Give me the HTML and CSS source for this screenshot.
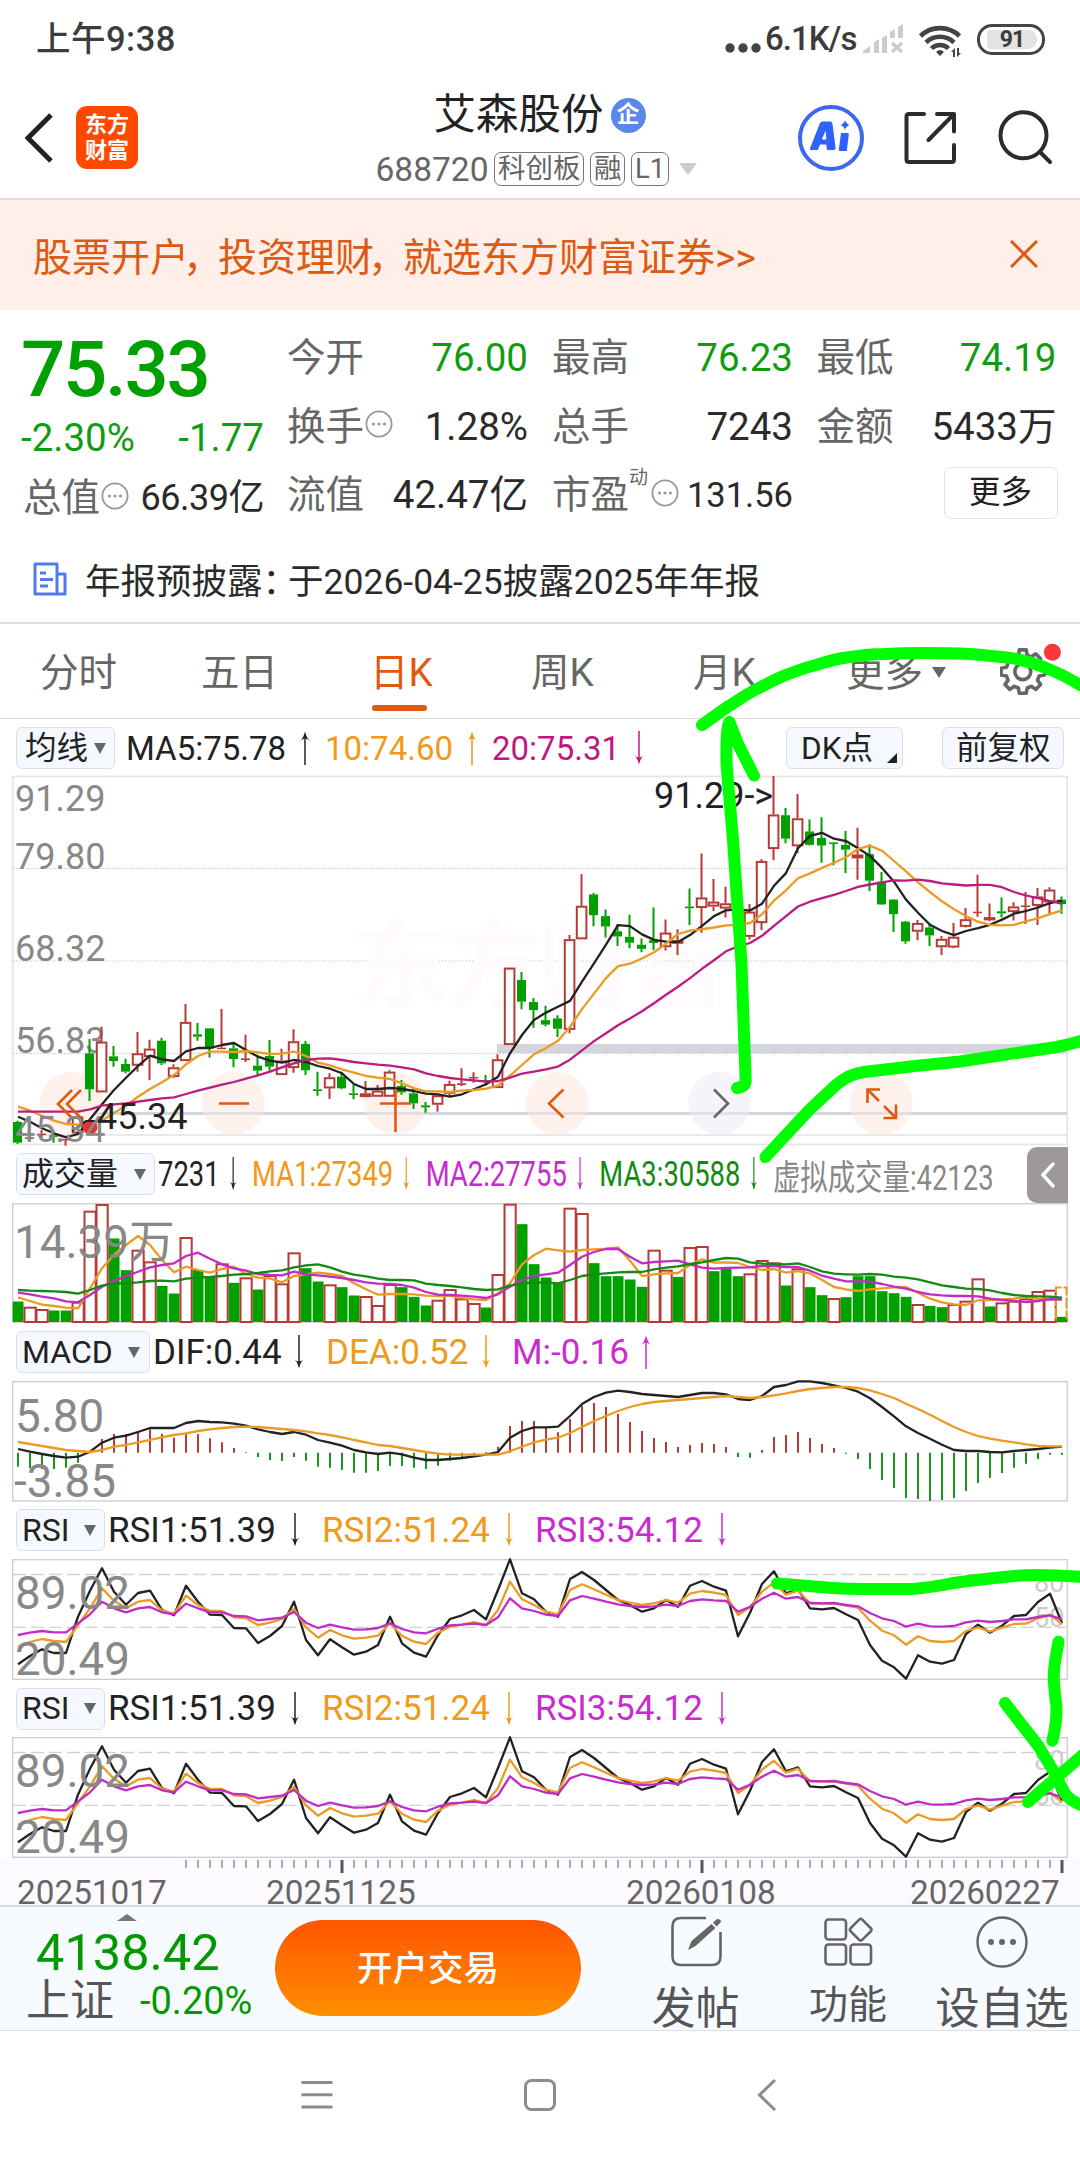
FILE: index.html
```html
<!DOCTYPE html>
<html lang="zh-CN">
<head>
<meta charset="utf-8">
<title>艾森股份 688720</title>
<link rel="stylesheet" href="styles.css">
</head>
<body>
<svg class="defs" width="0" height="0">
  <symbol id="down" viewBox="0 0 14 34"><path d="M7 0V31" stroke="currentColor" stroke-width="1.5" fill="none"/><path d="M.5 23q4.500 2 6.500 10.500q2-8.500 6.500-10.500q-4.500 3.500-6.500 3.500t-6.500-3.500z" fill="currentColor"/></symbol>
  <symbol id="up" viewBox="0 0 14 34"><path d="M7 3V34" stroke="currentColor" stroke-width="1.5" fill="none"/><path d="M.5 11q4.500-2 6.500-10.500q2 8.500 6.500 10.500q-4.500-3.500-6.500-3.500t-6.500 3.500z" fill="currentColor"/></symbol>
  <symbol id="info" viewBox="0 0 28 28"><circle cx="14" cy="14" r="12.6" fill="none" stroke="#999" stroke-width="1.8"/><g fill="#999"><circle cx="8.5" cy="14" r="1.6"/><circle cx="14" cy="14" r="1.6"/><circle cx="19.5" cy="14" r="1.6"/></g></symbol>
</svg>
<main class="phone">
  <header class="status">
    <span class="clock">上午9:38</span>
    <svg class="dots" width="36" height="30" viewBox="0 0 36 30"><g fill="#444"><circle cx="5" cy="24" r="4.7"/><circle cx="18" cy="24" r="4.7"/><circle cx="31" cy="24" r="4.7"/></g></svg>
    <span class="speed">6.1K/s</span>
    <svg class="signal" width="41" height="30" viewBox="0 0 41 30"><path fill="#ccc" d="M0 29V27l7-5v7zM11 18l5-3v14h-5zM19 14l5-3v18h-5zM27 8l5-3v9h-5zM35 3l5-3v14h-5z"/><path d="M29 19l10 9M39 19l-10 9" stroke="#ccc" stroke-width="3.5"/></svg>
    <svg class="wifi" width="44" height="34" viewBox="0 0 44 34"><g fill="none" stroke="#444" stroke-width="4.6"><path d="M1.500 12a28 28 0 0 1 39 0"/><path d="M7 18.500a20 20 0 0 1 28 0"/><path d="M12.500 24.500a12 12 0 0 1 17 0"/></g><path fill="#444" d="M17 28q4-4 8 0l-4 4zM32 28l4-4v9h-2v-5zM42 29l-4 4v-9h2v5z"/></svg>
    <span class="battery"><b>91</b></span>
  </header>

  <section class="title">
    <svg class="back" width="28" height="50" viewBox="0 0 28 50"><path d="M26 2L3 25l23 23" fill="none" stroke="#222" stroke-width="5"/></svg>
    <div class="logo"><span>东方</span><span>财富</span></div>
    <div class="name-block">
      <div class="name">艾森股份<i class="ent">企</i></div>
      <div class="code">688720<span class="tag">科创板</span><span class="tag">融</span><span class="tag">L1</span><span class="caret"></span></div>
    </div>
    <svg class="tools" width="280" height="100" viewBox="790 90 280 100">
      <circle cx="831" cy="138" r="31" fill="none" stroke="#3c68ee" stroke-width="4"/>
      <path fill="#2f62ff" fill-rule="evenodd" d="M820 123q.8-1.500 3-1.500h7q2 0 2.400 2l3.200 24q.2 2.500-2 2.500h-6.600l-.8-5.500h-6l-2.400 5.500h-6q-2.500 0-1.600-2.300zM825.500 130.500l-3.600 9h4.500z"/>
      <path fill="#2f62ff" d="M841 133h7q1 0 .8 1.500l-2 16.500h-6.600q-1.600 0-1.400-1.600zM845 120q1.200 4.200 5 5q-3.800.8-5 5q-1.200-4.200-5-5q3.800-.8 5-5z"/>
      <g fill="none" stroke="#2b2b2b" stroke-width="4" stroke-linecap="round" stroke-linejoin="round"><path d="M924 114h-15q-2.500 0-2.500 2.500v43q0 2.500 2.500 2.500h42.500q2.500 0 2.500-2.500V145M937 114h17v17.500M953 115l-24.500 25"/><circle cx="1023.500" cy="135.300" r="23"/><path d="M1040 152l10 10"/></g>
    </svg>
  </section>

  <section class="banner"><span>股票开户<i>，</i>投资理财<i>，</i>就选东方财富证券&gt;&gt;</span>
    <svg width="28" height="28" viewBox="0 0 28 28"><path d="M1 1l26 26M27 1L1 27" stroke="#dc5a14" stroke-width="3"/></svg>
  </section>

  <section class="quote">
    <div class="q-main">
      <div class="price">75.33</div>
      <div class="chg"><span>-2.30%</span><span>-1.77</span></div>
      <div class="cell small"><label>总值</label><svg class="info"><use href="#info"/></svg><b>66.39亿</b></div>
    </div>
    <div class="q-col">
      <div class="cell"><label>今开</label><b class="g">76.00</b></div>
      <div class="cell"><label>换手</label><svg class="info"><use href="#info"/></svg><b>1.28%</b></div>
      <div class="cell"><label>流值</label><b>42.47亿</b></div>
    </div>
    <div class="q-col">
      <div class="cell"><label>最高</label><b class="g">76.23</b></div>
      <div class="cell"><label>总手</label><b>7243</b></div>
      <div class="cell small"><label>市盈</label><sup>动</sup><svg class="info"><use href="#info"/></svg><b>131.56</b></div>
    </div>
    <div class="q-col last">
      <div class="cell"><label>最低</label><b class="g">74.19</b></div>
      <div class="cell"><label>金额</label><b>5433万</b></div>
      <div class="more">更多</div>
    </div>
  </section>

  <section class="news">
    <svg width="34" height="34" viewBox="0 0 34 34"><g fill="none" stroke="#4f7be8" stroke-width="3" stroke-linejoin="round"><path d="M2 2h22v30H2zM24 12h8v20h-8M7 11h6M7 17.500h13M7 24h8"/></g></svg>
    <span>年报预披露<i>：</i>于2026-04-25披露2025年年报</span>
  </section>

  <nav class="tabs">
    <span class="t1">分时</span><span class="t2">五日</span><span class="t3 on">日K</span><span class="t4">周K</span><span class="t5">月K</span><span class="t6">更多</span><i></i>
    <svg width="62" height="60" viewBox="1000 642 62 60"><path id="gear" fill="none" stroke="#666" stroke-width="3.600" stroke-linejoin="round"/><circle cx="1022.800" cy="670.600" r="8" fill="none" stroke="#666" stroke-width="3.600"/><circle cx="1052.400" cy="651.300" r="8.500" fill="#f93939"/></svg>
  </nav>

  <div class="row ma">
    <span class="pick">均线<i></i></span>
    <span class="v k">MA5:75.78</span><svg class="ar k"><use href="#up"/></svg>
    <span class="v o">10:74.60</span><svg class="ar o"><use href="#up"/></svg>
    <span class="v p">20:75.31</span><svg class="ar p"><use href="#down"/></svg>
    <span class="pick dk">DK点<em></em></span><span class="pick fq">前复权</span>
  </div>
  <svg class="plot" id="price" width="1080" height="369" viewBox="0 776 1080 369"></svg>

  <div class="row vol">
    <span class="pick">成交量<i></i></span>
    <div class="squeeze">
      <span class="v k">7231</span><svg class="ar k"><use href="#down"/></svg>
      <span class="v o">MA1:27349</span><svg class="ar o"><use href="#down"/></svg>
      <span class="v m">MA2:27755</span><svg class="ar m"><use href="#down"/></svg>
      <span class="v gr">MA3:30588</span><svg class="ar gr"><use href="#down"/></svg>
      <span class="v gy">虚拟成交量:42123</span>
    </div>
    <span class="fold"><svg width="18" height="28" viewBox="0 0 18 28"><path d="M14 3L4 14l10 11" fill="none" stroke="#fff" stroke-width="3.500" stroke-linecap="round"/></svg></span>
  </div>
  <svg class="plot" id="volume" width="1080" height="120" viewBox="0 1203 1080 120"></svg>

  <div class="row macd">
    <span class="pick">MACD<i></i></span>
    <span class="v k">DIF:0.44</span><svg class="ar k"><use href="#down"/></svg>
    <span class="v o">DEA:0.52</span><svg class="ar o"><use href="#down"/></svg>
    <span class="v m">M:-0.16</span><svg class="ar m"><use href="#up"/></svg>
  </div>
  <svg class="plot" id="macd" width="1080" height="120" viewBox="0 1381 1080 120"></svg>

  <div class="row rsi">
    <span class="pick">RSI<i></i></span>
    <span class="v k">RSI1:51.39</span><svg class="ar k"><use href="#down"/></svg>
    <span class="v o">RSI2:51.24</span><svg class="ar o"><use href="#down"/></svg>
    <span class="v m">RSI3:54.12</span><svg class="ar m"><use href="#down"/></svg>
  </div>
  <svg class="plot rsi-plot" width="1080" height="121" viewBox="0 1559 1080 121"></svg>
  <div class="row rsi second">
    <span class="pick">RSI<i></i></span>
    <span class="v k">RSI1:51.39</span><svg class="ar k"><use href="#down"/></svg>
    <span class="v o">RSI2:51.24</span><svg class="ar o"><use href="#down"/></svg>
    <span class="v m">RSI3:54.12</span><svg class="ar m"><use href="#down"/></svg>
  </div>
  <svg class="plot rsi-plot" width="1080" height="121" viewBox="0 1559 1080 121"></svg>

  <div class="axis">
    <svg id="ticks" width="1080" height="16" viewBox="0 1858 1080 16"></svg>
    <div class="dates"><span>20251017</span><span>20251125</span><span>20260108</span><span>20260227</span></div>
  </div>

  <footer class="bar">
    <div class="index"><i class="tri"></i><div class="pts">4138.42</div><div class="idx"><span>上证</span><b>-0.20%</b></div></div>
    <div class="trade">开户交易</div>
    <div class="act a1"><svg width="54" height="54" viewBox="669 1915 54 54"><path d="M706 1918h-25q-8.500 0-8.500 8.500v30q0 8.500 8.500 8.500h31q8.500 0 8.500-8.500V1932" fill="none" stroke="#666" stroke-width="2.600"/><path fill="#666" d="M688 1950l3.500-9 20-17 4 4-20 18zM713 1922.500l4-3.500q4 0 4 3l-4.500 4.500z"/></svg><span>发帖</span></div>
    <div class="act a2"><svg width="54" height="54" viewBox="822 1915 54 54"><g fill="none" stroke="#666" stroke-width="2.600"><rect x="826.500" y="1919.500" width="20.500" height="20" rx="3"/><rect x="826.500" y="1944.500" width="20.500" height="20" rx="3"/><rect x="851.500" y="1944.500" width="20.500" height="20" rx="3"/><rect x="853.500" y="1921.500" width="16.500" height="16.500" rx="2.500" transform="rotate(45 861.700 1929.700)"/></g></svg><span>功能</span></div>
    <div class="act a3"><svg width="54" height="54" viewBox="976 1915 54 54"><circle cx="1003" cy="1942" r="24.500" fill="none" stroke="#666" stroke-width="2.400"/><g fill="#666"><circle cx="992" cy="1942" r="3"/><circle cx="1003" cy="1942" r="3"/><circle cx="1014" cy="1942" r="3"/></g></svg><span>设自选</span></div>
  </footer>
  <div class="sysnav">
    <svg width="1080" height="40" viewBox="0 2075 1080 40"><g fill="none" stroke="#8c8c8c" stroke-width="3"><path d="M301.500 2082.500h31M301.500 2094.700h31M301.500 2107h31"/><rect x="525.500" y="2080.500" width="29" height="29" rx="6"/><path d="M775 2080l-15.500 15 15.500 15"/></g></svg>
  </div>

  <svg class="pen" width="1080" height="2160" viewBox="0 0 1080 2160">
    <g fill="none" stroke="#0f0" stroke-width="12" stroke-linecap="round" stroke-linejoin="round">
      <path d="M702 725L728 706.500C736 702 745 695 754 690.500C763 686 772 681 781 677C793 672 804 668 816 665C828 661 838 658.500 850 657C862 655 872 654.300 884 654Q903 653 922 653Q950 653 970 654Q995 656 1015 658.600Q1032 662 1046 668Q1064 675 1080 685"/>
      <path d="M737 1088C744 1087 746 1084 745.600 1079L741.500 964L733 840L726.600 765Q725.500 727 729.400 722L738 744L754 775.600"/>
      <path d="M765.500 1157L808.600 1110.700L836 1085Q849 1074 864 1072L915 1066L960 1061.500L1056.500 1047Q1070 1044.500 1084 1040"/>
      <path d="M777 1583.500L833 1588Q850 1589 870.600 1589L912 1589Q935 1587 953 1583Q975 1580 994.500 1578Q1018 1575 1036 1575Q1060 1575 1084 1577"/>
      <path d="M1058.600 1641.700Q1054 1665 1053.800 1675T1056.500 1706.700Q1057 1722 1052.400 1740.700"/>
      <path d="M1005 1703L1022 1725Q1034 1740 1039 1747L1057 1777Q1062 1790 1067 1796T1084 1806"/>
      <path d="M1028 1802L1084 1754"/>
    </g>
  </svg>
</main>
<script src="charts.js"></script>
</body>
</html>
```
FILE: styles.css
```css
* { box-sizing: border-box; }
body { margin: 0; background: #fff; font-family: Roboto, "Noto Sans CJK SC", sans-serif; color: #222; }
i, em { font-style: normal; }
b { font-weight: 400; }
svg { display: block; flex: none; }
.defs { position: absolute; }
.phone { position: relative; width: 1080px; height: 2160px; overflow: hidden; display: flex; flex-direction: column; background: #fff; white-space: nowrap; }
.phone > * { flex: none; }

.status { height: 76px; display: flex; align-items: center; padding: 2px 35px 0 36px; color: #3c3c3c; }
.clock { font-size: 34.500px; font-weight: 500; letter-spacing: .5px; line-height: 76px; }
.dots { margin-left: auto; }
.speed { width: 102px; padding-left: 4px; font-size: 33px; font-weight: 500; line-height: 76px; letter-spacing: -1px; }
.signal { margin-right: 15px; }
.wifi { margin-right: 14px; margin-top: 4px; }
.battery { width: 68px; height: 31px; border: 3px solid #444; border-radius: 15px; display: flex; padding: 3px 5px 3px 7px; }
.battery b { flex: 1; background: #e3e3e3; border-radius: 4px 9px 9px 4px; font-size: 23px; font-weight: 700; line-height: 20px; text-align: center; letter-spacing: -1px; }

.title { height: 124px; border-bottom: 2px solid #ddd; display: flex; align-items: flex-start; padding-left: 25px; }
.back { margin-top: 37px; }
.logo { margin: 30px 0 0 23px; width: 62px; height: 63px; border-radius: 11px; background: #ff4800; color: #fff; font-size: 22px; font-weight: 700; line-height: 26px; text-align: center; display: flex; flex-direction: column; justify-content: center; }
.name-block { margin: 15px 0 0 237.500px; width: 325px; }
.name { margin-left: 58px; display: flex; align-items: center; font-size: 42.500px; line-height: 48px; color: #222; }
.ent { margin-left: 7px; width: 35px; height: 35px; border-radius: 50%; background: #5a87e8; color: #fff; font-size: 23px; font-weight: 700; line-height: 34px; text-align: center; }
.code { display: flex; align-items: center; margin-top: 12px; height: 36px; font-size: 33.5px; color: #666; }
.tag { height: 34px; margin-left: 5.500px; padding: 0 3px; border: 1.5px solid #777; border-radius: 7px; font-size: 27.5px; line-height: 32px; }
.caret { margin-left: 10px; border: 9.500px solid transparent; border-top: 12px solid #ccc; border-bottom: 0; }
.tools { margin: 14px 0 0 89.500px; }

.banner { height: 110px; background: #ffefe8; display: flex; align-items: center; justify-content: space-between; padding: 2px 42px 4px 33px; color: #dc5a14; font-size: 39px; }
.banner i { margin-left: -6px; letter-spacing: -4px; }

.quote { height: 220px; display: grid; grid-template-columns: 264px 265px 264.500px 240px; padding: 0 0 0 23px; }
.q-main { width: 241px; }
.price { font-size: 78px; font-weight: 500; line-height: 80px; margin: 20px 0 0 -2px; color: #00a000; letter-spacing: -2.300px; }
.chg { display: flex; justify-content: space-between; height: 54px; line-height: 54px; font-size: 38.500px; color: #139a13; margin: 1px 0 0 -2px; }
.q-main .cell { height: 68px; margin-top: -1px; }
.q-col { padding-top: 14px; width: 241px; }
.cell { height: 68.500px; display: flex; align-items: center; font-size: 38.500px; color: #2a2a2a; line-height: 68px; }
.cell label { color: #666; width: 78px; }
.cell b { margin-left: auto; }
.small b { font-size: 36px; letter-spacing: -.5px; }
.q-col .small b { font-size: 34.500px; letter-spacing: 0; }
.cell .g { color: #139a13; }
.info { width: 28px; height: 28px; margin-top: -5px; }
.cell sup { font-size: 19px; line-height: 20px; color: #666; align-self: flex-start; margin: 7px 0 0 -1px; width: 20px; }
.cell sup + .info { margin-left: 2px; }
.last { width: 240px; }
.more { width: 114px; height: 52px; margin: 6px -1px 0 auto; border: 1.500px solid #e3e3e3; border-radius: 7px; font-size: 31.500px; line-height: 49px; text-align: center; }

.news { height: 94px; border-bottom: 2px solid #ddd; display: flex; align-items: center; padding: 9px 0 5px 33px; font-size: 35.500px; color: #2a2a2a; }
.news svg { margin-top: 2px; }
.news span { margin-left: 18px; }
.news i { letter-spacing: -10px; }

.tabs { height: 95px; border-bottom: 1.500px solid #ddd; display: flex; position: relative; font-size: 38.500px; line-height: 97px; color: #666; padding-left: 40px; }
.tabs span { margin-right: 83px; width: 77px; flex: none; }
.tabs .t2 { margin-left: 1px; }
.tabs .t3 { color: #e0590f; width: 62px; position: relative; margin-right: 99px; margin-left: 9px; }
.tabs .t3::after { content: ""; position: absolute; left: 2px; bottom: 7px; width: 55px; height: 6px; border-radius: 3px; background: #e0590f; }
.tabs .t4 { width: 64px; margin-right: 98px; }
.tabs .t5 { width: 64px; margin-right: 89px; }
.tabs .t6 { margin-right: 9px; }
.tabs > i { border: 7px solid transparent; border-top: 11px solid #666; border-bottom: 0; height: 0; margin: 43px 54px 0 0; }
.tabs svg { margin-top: 19px; }

.row { display: flex; align-items: center; position: relative; padding-left: 16px; height: 58px; font-size: 35px; }
.pick { height: 42px; border: 1.500px solid #dcdfe8; border-radius: 6px; background: #f5f9ff; font-size: 32px; line-height: 39px; color: #222; display: flex; align-items: center; justify-content: space-between; padding: 0 8px 0 5px; flex: none; }
.pick i { border: 6.700px solid transparent; border-top: 11.500px solid #666; border-bottom: 0; }
.v { display: block; flex: none; }
.ar { width: 14px; height: 34px; }
.k { color: #222; } .o { color: #f09a1a; } .p { color: #c01880; } .m { color: #c92bd0; } .gr { color: #138a13; } .gy { color: #888; }
.ma { height: 58px; margin-bottom: -1px; padding-top: 0; font-size: 33px; }
.ma .pick { width: 99px; padding-left: 8px; font-size: 31.500px; }
.ma .v { width: 160px; margin-left: 11px; }
.ma .ar { margin-left: 12px; }
.ma .v.o, .ma .v.p { width: 130px; margin-left: 13px; }
.ma .ar.o { margin-left: 10px; }
.ma .ar.p { margin-left: 10px; }
.ma .dk { width: 117px; margin-left: 140px; padding: 0 5px 0 14px; }
.ma .fq { width: 122px; margin-left: 39px; padding-left: 13px; }
.dk em { border: 5.500px solid #222; border-top-color: transparent; border-left-color: transparent; align-self: flex-end; margin-bottom: 5px; }
.vol .pick { width: 139px; }
.squeeze { display: flex; align-items: center; transform: scaleX(.783); transform-origin: 0 50%; margin-left: 3px; width: 840px; }
.squeeze .ar { margin: 0 16.500px 0 9px; width: 16px; }
.fold { margin-left: 29px; margin-top: 1px; width: 41px; height: 56px; background: #9c989c; border-radius: 10px 0 0 10px; display: flex; align-items: center; justify-content: center; }
.macd .pick { width: 134px; padding-right: 9px; }
.macd .v { margin-left: 3px; width: 129px; }
.macd .ar { margin-left: 10px; }
.macd .v.o { margin-left: 20px; width: 143px; }
.macd .v.m { margin-left: 19px; width: 119px; }
.macd .ar.m { margin-left: 8px; }
.rsi .pick { width: 89px; }
.rsi .v { margin-left: 3px; width: 168px; }
.rsi .ar { margin-left: 12px; }
.rsi .v.o, .rsi .v.m { margin-left: 20px; }
.rsi .v.m { margin-left: 19px; }
.second { height: 57px; }
.plot { overflow: visible; }
.plot text { font-family: Roboto, "Noto Sans CJK SC", sans-serif; }

.axis { height: 47px; background: #fdfaff; overflow: hidden; }
.dates { display: flex; font-size: 33.300px; line-height: 38px; height: 31px; color: #666; padding-left: 17px; }
.dates span { width: 249px; }
.dates span:nth-child(2) { width: 360px; }
.dates span:nth-child(3) { width: 284px; }
.dates span:nth-child(4) { width: 152px; }

.bar { height: 126px; background: #f7faff; border-top: 2px solid #d3d9e0; border-bottom: 1.500px solid #dde0e6; display: flex; align-items: flex-start; }
.index { width: 275px; padding-left: 26px; }
.tri { display: block; width: 0; margin: 7px 0 0 91px; border: 10px solid transparent; border-bottom: 7px solid #777; border-top: 0; }
.pts { margin-left: 10px; height: 56px; font-size: 50.500px; line-height: 63px; color: #009a00; }
.idx { display: flex; line-height: 48px; font-size: 38px; }
.idx span { width: 114px; font-size: 44px; color: #555; }
.idx b { color: #009a00; }
.trade { margin-top: 13px; width: 306px; height: 96px; border-radius: 48px; background: linear-gradient(#ff5500, #ff8f00); color: #fff; font-size: 35.500px; font-weight: 500; line-height: 99px; text-align: center; }
.act { display: flex; flex-direction: column; align-items: center; color: #555; font-size: 44px; padding-top: 8px; }
.act span { line-height: 60px; margin-top: 9.500px; }
.a1 { width: 90px; margin-left: 69.500px; }
.a2 { width: 90px; margin-left: 62.500px; font-size: 39px; }
.a2 span { margin-top: 6px; }
.a3 { width: 136px; margin-left: 41px; font-size: 44.500px; }
.sysnav { padding-top: 44px; }
.pen { position: absolute; left: 0; top: 0; }
```
FILE: charts.js
```js
const RED = '#b83a34', GREEN = '#00a000', BLACK = '#222', ORANGE = '#eb9a24', PURPLE = '#bb1c7e', MAGENTA = '#c12cc8';
const X = i => 18 + 12 * i;
const nums = s => s.trim().split(/[\s,]+/).map(Number);
const third = base => v => base + v / 3;
const priceY = (v, i) => i < 44 ? 700 + v / 3 : 620 + v / 2.904;
const line = (vals, y, color, w = 2.3) =>
  `<polyline fill="none" stroke="${color}" stroke-width="${w}" stroke-linejoin="round" points="${nums(vals).map((v, i) => X(i) + ',' + y(v, i).toFixed(1)).join(' ')}"/>`;
const text = (x, y, size, fill, s) => `<text x="${x}" y="${y}" font-size="${size}" fill="${fill}">${s}</text>`;
const frame = (y, h, c = '#ccc', w = 1.3) => `<rect x="12.700" y="${y}" width="1054.500" height="${h}" fill="none" stroke="${c}" stroke-width="${w}"/>`;

/* one candle per row: direction, high, body top, body bottom, low */
const candles = `G 1262 1266 1328 1332|R 1305 1312 1315 1320|R 1290 1301 1304 1315|G 1290 1306 1310 1328|R 1317 1317 1321 1337|R 1247 1250 1300 1305|G 1017 1060 1168 1203|R 980 1025 1177 1177|G 1038 1069 1083 1100|G 1076 1092 1115 1120|R 996 1060 1097 1115|R 1019 1046 1071 1140|G 1013 1022 1090 1095|R 1093 1102 1131 1133|R 912 966 1083 1083|G 969 1003 1010 1022|G 985 985 1046 1073|R 927 1043 1047 1047|G 1030 1045 1077 1102|R 1004 1075 1080 1086|G 1064 1097 1112 1125|G 1020 1068 1100 1112|R 1046 1082 1125 1125|R 988 1024 1104 1118|G 1023 1032 1111 1125|G 1115 1168 1173 1187|R 1120 1132 1165 1197|G 1115 1130 1165 1168|G 1152 1180 1185 1198|R 1143 1180 1191 1191|R 1155 1172 1190 1190|R 1110 1115 1190 1190|G 1140 1158 1177 1184|G 1160 1180 1210 1227|G 1206 1216 1222 1238|R 1186 1186 1214 1235|R 1142 1152 1181 1190|R 1105 1150 1155 1158|R 1117 1131 1135 1148|G 1125 1140 1144 1158|R 1063 1078 1164 1164|R 803 803 1035 1035|G 816 840 905 928|G 894 906 930 983|G 1120 1162 1175 1180|G 1148 1157 1187 1211|R 915 927 1190 1200|R 738 830 927 927|G 793 797 857 889|G 841 860 890 922|G 883 904 919 947|G 856 920 937 953|G 925 943 955 965|G 835 930 938 958|R 870 908 950 960|R 898 930 940 973|G 780 832 837 886|R 678 806 836 908|R 752 818 832 845|R 775 823 838 864|G 840 850 900 930|R 825 847 920 928|R 695 700 880 900|R 453 565 665 698|G 546 567 635 648|R 505 576 657 677|G 579 614 653 655|G 573 633 655 705|G 647 646 650 712|G 613 653 667 735|R 603 681 692 754|G 652 680 757 787|G 732 760 826 828|G 810 812 854 906|G 874 876 933 940|R 871 880 905 930|G 880 893 916 947|R 918 926 950 973|R 880 920 951 953|R 836 869 891 893|R 740 847 851 862|R 823 863 872 875|G 806 846 852 864|R 820 832 848 873|R 790 829 833 883|R 778 803 830 886|R 776 783 820 855|G 803 812 825 853`.split('|').map(s => s.split(' '));

let s = frame(776.500, 368, '#e6e6e6', 1.800);
[868.5, 961, 1053.5].forEach(y => s += `<path d="M13 ${y}H1067" stroke="#c9c9c9" stroke-width="1" stroke-dasharray="1.500 1.500"/>`);
s += `<text x="354" y="1000" font-size="95" font-weight="700" fill="#fefafd" letter-spacing="-3">东方财富</text>`;
s += '<path d="M497 1048.500H1067" stroke="#d3d5dd" stroke-width="9"/><path d="M95 1113.500H1067" stroke="#d3d5dd" stroke-width="3"/><path d="M13 1135H1067" stroke="#d3d3d8" stroke-width="1.200"/>';
s += text(15, 811, 36, '#888', '91.29') + text(15, 869, 36, '#888', '79.80') + text(15, 961, 36, '#888', '68.32') + text(15, 1053, 36, '#888', '56.83');
[71.3, 233.4, 395.3, 557.3, 719.4, 881.3].forEach((x, i) => s += `<circle cx="${x}" cy="1103.300" r="31.300" fill="${i == 4 ? '#f5f2f8' : '#fff0ea'}" fill-opacity=".9"/>`);
s += '<path d="M95 1113.500H1067" stroke="#d3d5dd" stroke-opacity=".6" stroke-width="3"/>';
candles.forEach(([d, ...v], i) => {
  const [h, t, b, l] = v.map(n => priceY(+n, i)), x = X(i) - .5, c = d === 'G' ? GREEN : RED;
  s += `<path d="M${x} ${h}V${t}M${x} ${b}V${l}" stroke="${c}" stroke-width="2"/>`;
  if (d === 'G' || b - t < 2.200) s += `<rect x="${x - 4.5}" y="${t}" width="9" height="${Math.max(1.5, b - t)}" fill="${c}"/>`;
  else s += `<rect x="${x - 4.7}" y="${t + .9}" width="9.600" height="${Math.max(.5, b - t - 1.8)}" fill="#fff" stroke="${c}" stroke-width="2"/>`;
});
s += line('1250 1265 1285 1300 1312 1302 1258 1213 1170 1133 1098 1067 1078 1083 1054 1044 1044 1035 1029 1050 1070 1082 1088 1080 1086 1098 1106 1120 1152 1167 1167 1164 1167 1173 1181 1183 1190 1183 1168 1153 1130 1060 1005 960 1140 1123 1106 1050 997 943 886 889 913 929 934 935 915 888 860 843 840 844 824 772 735 663 627 618 635 642 663 685 720 760 812 850 885 903 915 903 895 885 870 853 845 835 822 815', priceY, BLACK);
s += line('1220 1232 1247 1262 1272 1274 1272 1262 1238 1218 1190 1167 1147 1125 1093 1068 1055 1055 1056 1053 1057 1062 1061 1055 1068 1088 1096 1108 1118 1128 1133 1137 1150 1165 1174 1174 1176 1172 1170 1166 1157 1127 1095 1063 1243 1222 1182 1130 1085 1040 1005 998 983 965 940 912 902 898 893 887 885 880 855 815 785 750 736 720 705 689 665 655 670 700 730 762 790 817 840 860 876 885 887 885 875 866 854 843', priceY, ORANGE);
s += line('1235 1235 1235 1235 1235 1235 1228 1217 1213 1210 1205 1200 1195 1192 1182 1172 1163 1154 1146 1136 1126 1115 1102 1090 1080 1076 1075 1080 1086 1090 1094 1097 1102 1108 1120 1128 1134 1138 1141 1145 1143 1133 1121 1115 1305 1297 1277 1250 1223 1200 1177 1157 1136 1113 1088 1065 1040 1013 988 962 948 938 917 888 860 832 818 808 798 787 775 768 762 756 757 754 758 765 768 771 769 769 776 790 800 808 816 824', priceY, PURPLE);
s += '<g fill="none" stroke="#e0590f" stroke-width="2.600"><path d="M72 1090l-14 14 14 14M81 1090l-14 14 14 14M219 1103.500h30M380 1103.500h31M395.500 1089v43"/><path d="M563.500 1089.500l-14.500 14 14.500 14M867.500 1103V1089.500H880M868 1090l11 11M896 1104.500V1118H883.500M895 1117l-11-11"/></g>';
s += '<path d="M714 1089.500l14 14-14 14" fill="none" stroke="#666" stroke-width="2.600"/>';
s += '<circle cx="90" cy="1127" r="7.500" fill="#e8332c"/><path d="M98 1121H86l-14 10M98 1121" fill="none" stroke="#222" stroke-width="2"/>';
s += text(15, 1142, 36, '#888', '45.34') + text(97, 1129, 36, BLACK, '45.34') + text(654, 808, 36, BLACK, '91.29-&gt;');
document.getElementById('price').innerHTML = s;

/* volume bars */
const vol = `G486 R503 R510 G513 G513 R488 R215 R195 G297 G392 R332 R367 G439 G462 R294 G392 G410 R373 G430 R415 G450 R408 R433 R340 G386 G426 R436 G443 G468 R471 R498 R435 G443 G472 G498 R482 R450 R478 R492 G504 R405 R194 G254 G374 G414 G430 R206 R222 G371 G410 G410 G420 G442 R332 R392 G412 R324 R321 G395 G386 G410 R403 R363 R370 G438 R388 G443 G467 R477 G473 G410 G410 G455 G461 G472 R495 G499 G503 R495 R485 R418 G501 R490 R485 R478 R456 R452 G532`.split(' ');
const vy = third(1140);
s = frame(1203.700, 118.500);
vol.forEach((e, i) => {
  const y = vy(+e.slice(1)), x = X(i), b = 1322;
  s += e[0] === 'G' ? `<rect x="${x - 5.3}" y="${y - .5}" width="10.800" height="${b - y + .5}" fill="${GREEN}"/>`
    : `<rect x="${x - 5.5}" y="${y}" width="11.200" height="${b - y}" fill="#fff" stroke="${RED}" stroke-width="2"/>`;
});
s += `<path d="M1056 1319V1287.500H1066.500V1319" fill="none" stroke="${ORANGE}" stroke-width="2" stroke-dasharray="11 2"/>`;
s += line('472 483 494 498 503 505 445 385 345 315 288 315 360 397 380 390 398 387 380 402 413 415 427 408 403 398 402 408 430 448 464 462 462 463 467 468 467 474 478 480 460 430 373 345 326 331 335 330 328 326 322 362 408 403 400 399 375 358 368 367 369 381 390 387 398 393 400 420 441 448 453 448 445 442 441 458 476 487 493 495 481 480 478 476 471 477 479 478', vy, ORANGE);
s += line('458 463 470 475 484 487 465 440 422 409 395 382 375 370 348 338 356 373 385 392 402 405 406 395 403 406 410 414 420 427 431 432 435 443 456 464 465 467 470 474 463 440 420 408 403 398 375 350 336 327 327 350 370 366 364 362 373 383 386 384 383 382 378 378 381 381 392 407 416 424 424 425 432 440 446 456 463 466 468 468 469 476 480 483 486 483 477 478', vy, MAGENTA);
s += line('450 452 453 454 456 461 450 437 430 430 427 423 422 424 416 413 411 408 404 402 399 394 391 382 376 373 382 395 404 409 416 420 420 421 431 435 438 442 447 450 448 437 430 428 427 430 420 408 403 400 397 396 396 388 383 379 372 367 360 354 356 367 371 372 373 370 381 394 401 403 404 402 404 410 413 418 427 436 441 446 447 451 459 465 468 469 470 473', vy, '#138a13');
s += text(14, 1258, 45.8, '#888', '14.39万');
document.getElementById('volume').innerHTML = s;

/* MACD histogram around the zero line */
s = frame(1381.700, 119.300);
nums('980 985 987 987 983 968 940 897 882 882 873 868 882 893 878 882 895 907 924 936 951 960 963 951 962 980 983 990 998 998 993 978 978 983 987 977 962 953 945 936 920 858 843 843 862 877 837 797 789 801 822 846 873 894 906 921 915 909 912 921 951 953 930 891 885 876 894 912 924 941 957 987 1020 1044 1074 1077 1083 1080 1074 1053 1029 1014 999 983 971 957 944 944').forEach((v, i) =>
  s += `<path d="M${X(i)} 1452.700V${(1140 + v / 3).toFixed(1)}" stroke="${v < 938 ? RED : '#1a961a'}" stroke-width="2"/>`);
s += line('927 935 942 948 953 950 935 908 893 887 876 864 864 864 849 843 846 847 851 857 868 876 882 876 884 900 908 917 930 937 942 938 943 953 960 960 957 954 949 944 936 893 873 862 862 860 828 792 771 758 752 756 762 765 768 771 765 759 759 763 777 780 768 741 735 724 724 729 736 744 755 775 801 829 859 879 896 914 930 933 933 936 937 933 930 927 923 920', third(1140), BLACK);
s += line('906 912 918 924 930 933 936 930 920 915 907 900 892 885 880 873 868 864 861 860 861 864 867 870 874 880 885 892 900 907 915 918 924 930 936 941 944 944 944 944 944 934 920 907 899 893 879 861 843 828 813 801 792 786 783 780 777 774 771 768 771 774 771 766 760 753 747 744 741 741 744 751 762 774 791 807 824 843 861 876 888 896 902 907 913 918 919 919', third(1140), ORANGE);
s += text(15, 1432, 45.8, '#888', '5.80') + text(14, 1497, 45.8, '#888', '-3.85');
document.getElementById('macd').innerHTML = s;

/* RSI, drawn in both lower panels */
s = frame(1559.700, 119.600);
s += '<path d="M13 1574.500H1067M13 1627.300H1067" stroke="#d2d2d2" stroke-width="1.300" stroke-dasharray="13 5"/>';
s += text(1034, 1592, 27, '#ccc', '80') + text(1034, 1627, 27, '#ccc', '50');
s += line('493 468 448 459 459 350 272 205 275 314 279 272 330 346 257 305 344 345 384 385 429 408 378 305 420 466 418 442 464 455 435 350 430 458 470 405 357 346 330 358 270 178 280 298 335 350 237 216 240 270 300 315 335 325 300 320 257 243 260 272 409 338 252 214 280 268 325 328 324 343 360 435 482 502 536 466 485 491 480 402 374 398 377 348 345 306 281 370', third(1500), BLACK);
s += line('440 426 417 423 426 375 325 265 302 325 305 300 332 341 287 315 333 333 352 354 375 368 357 327 382 413 390 406 416 413 407 370 407 425 432 398 380 374 366 375 330 245 298 315 335 343 270 253 268 284 300 308 315 310 300 308 281 273 278 285 345 321 275 248 284 272 310 310 311 317 323 362 392 406 434 409 423 426 423 393 382 395 383 372 371 355 344 372', third(1500), ORANGE);
s += line('405 398 393 397 397 370 343 305 325 337 325 321 337 343 311 325 337 337 348 349 361 357 353 336 368 384 374 382 389 388 384 370 387 397 400 386 376 374 371 375 352 295 325 333 344 348 301 288 296 305 313 318 321 319 314 318 303 298 301 303 335 320 296 278 296 291 309 310 309 315 319 339 355 363 380 371 379 380 378 367 362 366 363 358 358 351 346 358', third(1500), MAGENTA);
s += text(15, 1609, 45.8, '#888', '89.02') + text(15, 1675, 45.8, '#888', '20.49');
document.querySelectorAll('.rsi-plot').forEach(el => el.innerHTML = s);

/* trading-day ticks */
s = '';
for (let i = 14; i < 88; i++) {
  const major = i === 27 || i === 57 || i === 87;
  s += `<path d="M${X(i)} 1860V${major ? 1873 : 1868}" stroke="${major ? '#555' : '#999'}" stroke-width="${major ? 3 : 1.6}"/>`;
}
document.getElementById('ticks').innerHTML = s;

/* eight-tooth settings gear */
const g = [], cx = 1022.8, cy = 670.6;
for (let k = 0; k < 8; k++) {
  [[-15, 17], [-9, 22], [9, 22], [15, 17]].forEach(([a, r]) => {
    const t = (k * 45 + a - 90) * Math.PI / 180;
    g.push((cx + r * Math.cos(t)).toFixed(1) + ' ' + (cy + r * Math.sin(t)).toFixed(1));
  });
}
document.getElementById('gear').setAttribute('d', 'M' + g.join('L') + 'Z');
```
